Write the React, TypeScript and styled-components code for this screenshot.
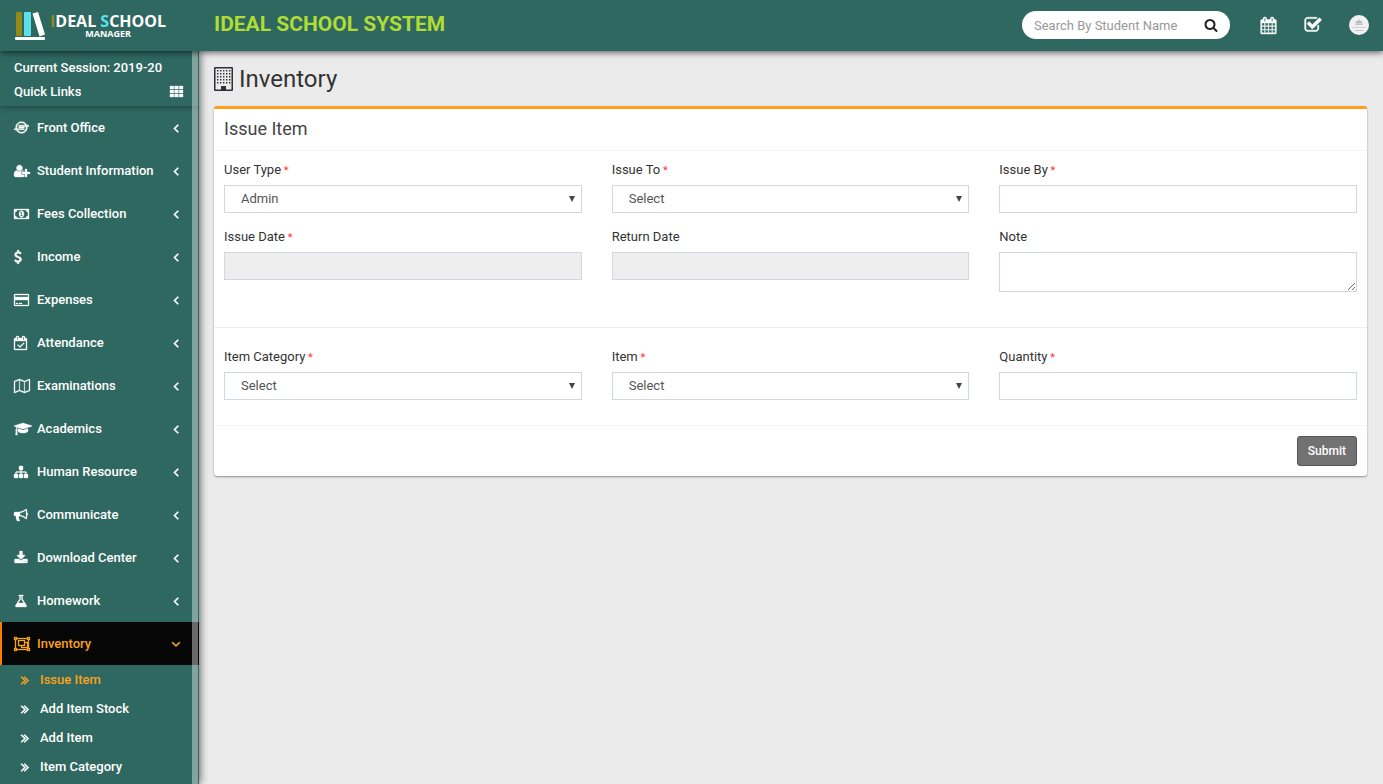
import React from 'react';
import styled, { createGlobalStyle, css } from 'styled-components';
import { FaIoxhost } from 'react-icons/fa';

const GlobalStyle = createGlobalStyle`
  *, *::before, *::after { box-sizing: border-box; }
  body {
    margin: 0;
    background: #ebebeb;
    color: #333;
    font-family: Roboto, "Liberation Sans", sans-serif;
    font-size: 13px;
    line-height: 20px;
  }
  button, input, select, textarea { font: inherit; }
`;

const GREEN = '#2f6860';
const ORANGE = '#faa21c';

/* ---------- icons ---------- */

const glyphs = {
  userPlus: { w: 2048, d: 'M704 896q-159 0-271.5-112.5t-112.5-271.5 112.5-271.5 271.5-112.5 271.5 112.5 112.5 271.5-112.5 271.5-271.5 112.5zm960 128h352q13 0 22.5 9.5t9.5 22.5v192q0 13-9.5 22.5t-22.5 9.5h-352v352q0 13-9.5 22.5t-22.5 9.5h-192q-13 0-22.5-9.5t-9.5-22.5v-352h-352q-13 0-22.5-9.5t-9.5-22.5v-192q0-13 9.5-22.5t22.5-9.5h352v-352q0-13 9.5-22.5t22.5-9.5h192q13 0 22.5 9.5t9.5 22.5v352zm-736 224q0 52 38 90t90 38h256v238q-68 50-171 50h-874q-121 0-194-69t-73-190q0-53 3.5-103.5t14-109 26.5-108.5 43-97.5 62-81 85.5-53.5 111.5-20q19 0 39 17 79 61 154.5 91.5t164.5 30.5 164.5-30.5 154.5-91.5q20-17 39-17 132 0 217 96h-223q-52 0-90 38t-38 90v192z' },
  money: { w: 1920, d: 'M768 1152h384v-96h-128v-448h-114l-148 137 77 80q42-37 55-57h2v288h-128v96zm512-256q0 70-21 142t-59.5 134-101.5 101-138 39-138-39-101.5-101-59.5-134-21-142 21-142 59.5-134 101.5-101 138-39 138 39 101.5 101 59.5 134 21 142zm512 256v-512q-106 0-181-75t-75-181h-1152q0 106-75 181t-181 75v512q106 0 181 75t75 181h1152q0-106 75-181t181-75zm128-832v1152q0 26-19 45t-45 19h-1792q-26 0-45-19t-19-45v-1152q0-26 19-45t45-19h1792q26 0 45 19t19 45z' },
  dollar: { w: 1024, d: 'M978 1185q0 153-99.5 263.5t-258.5 136.5v175q0 14-9 23t-23 9h-135q-13 0-22.5-9.5t-9.5-22.5v-175q-66-9-127.5-31t-101.5-44.5-74-48-46.5-37.5-17.5-18q-17-21-2-41l103-135q7-10 23-12 15-2 24 9l2 2q113 99 243 125 37 8 74 8 81 0 142.5-43t61.5-122q0-28-15-53t-33.5-42-58.5-37.5-66-32-80-32.5q-39-16-61.5-25t-61.5-26.5-62.5-31-56.5-35.5-53.5-42.5-43.5-49-35.5-58-21-66.5-8.5-78q0-138 98-242t255-134v-180q0-13 9.5-22.5t22.5-9.5h135q14 0 23 9t9 23v176q57 6 110.5 23t87 33.5 63.5 37.5 39 29 15 14q17 18 5 38l-81 146q-8 15-23 16-14 3-27-7-3-3-14.5-12t-39-26.5-58.5-32-74.5-26-85.5-11.5q-95 0-155 43t-60 111q0 26 8.5 48t29.5 41.5 39.5 33 56 31 60.5 27 70 27.5q53 20 81 31.5t76 35 75.5 42.5 62 50 53 63.5 31.5 76.5 13 94z' },
  card: { w: 1920, d: 'M1760 128q66 0 113 47t47 113v1216q0 66-47 113t-113 47h-1600q-66 0-113-47t-47-113v-1216q0-66 47-113t113-47h1600zm-1600 128q-13 0-22.5 9.5t-9.5 22.5v224h1664v-224q0-13-9.5-22.5t-22.5-9.5h-1600zm1600 1280q13 0 22.5-9.5t9.5-22.5v-608h-1664v608q0 13 9.5 22.5t22.5 9.5h1600zm-1504-128v-128h256v128h-256zm384 0v-128h384v128h-384z' },
  calendarCheck: { w: 1664, d: 'M1303 964l-512 512q-10 9-23 9t-23-9l-288-288q-9-10-9-23t9-22l46-46q9-9 22-9t23 9l220 220 444-444q10-9 23-9t22 9l46 46q9 9 9 22t-9 23zm-1175 700h1408v-1024h-1408v1024zm384-1216v-288q0-14-9-23t-23-9h-64q-14 0-23 9t-9 23v288q0 14 9 23t23 9h64q14 0 23-9t9-23zm768 0v-288q0-14-9-23t-23-9h-64q-14 0-23 9t-9 23v288q0 14 9 23t23 9h64q14 0 23-9t9-23zm384-64v1280q0 52-38 90t-90 38h-1408q-52 0-90-38t-38-90v-1280q0-52 38-90t90-38h128v-96q0-66 47-113t113-47h64q66 0 113 47t47 113v96h384v-96q0-66 47-113t113-47h64q66 0 113 47t47 113v96h128q52 0 90 38t38 90z' },
  map: { w: 2048, d: 'M2020 11q28 20 28 53v1408q0 20-11 36t-29 23l-640 256q-24 11-48 0l-616-246-616 246q-10 5-24 5-19 0-36-11-28-20-28-53v-1408q0-20 11-36t29-23l640-256q24-11 48 0l616 246 616-246q32-13 60 6zm-1284 135v1270l576 230v-1270zm-608 217v1270l544-217v-1270zm1792 1066v-1270l-544 217v1270z' },
  cap: { w: 2304, d: 'M1774 836l18 316q4 69-82 128t-235 93.5-323 34.5-323-34.5-235-93.5-82-128l18-316 574 181q22 7 48 7t48-7zm530-324q0 23-22 31l-1120 352q-4 1-10 1t-10-1l-652-206q-43 34-71 111.5t-34 178.5q63 36 63 109 0 69-58 107l58 433q2 14-8 25-9 11-24 11h-192q-15 0-24-11-10-11-8-25l58-433q-58-38-58-107 0-73 65-111 11-207 98-330l-333-104q-22-8-22-31t22-31l1120-352q4-1 10-1t10 1l1120 352q22 8 22 31z' },
  sitemap: { w: 1792, d: 'M1792 1248v320q0 40-28 68t-68 28h-320q-40 0-68-28t-28-68v-320q0-40 28-68t68-28h96v-192h-512v192h96q40 0 68 28t28 68v320q0 40-28 68t-68 28h-320q-40 0-68-28t-28-68v-320q0-40 28-68t68-28h96v-192h-512v192h96q40 0 68 28t28 68v320q0 40-28 68t-68 28h-320q-40 0-68-28t-28-68v-320q0-40 28-68t68-28h96v-192q0-52 38-90t90-38h512v-192h-96q-40 0-68-28t-28-68v-320q0-40 28-68t68-28h320q40 0 68 28t28 68v320q0 40-28 68t-68 28h-96v192h512q52 0 90 38t38 90v192h96q40 0 68 28t28 68z' },
  bullhorn: { w: 1792, d: 'M1664 640q53 0 90.5 37.5t37.5 90.5-37.5 90.5-90.5 37.5v384q0 52-38 90t-90 38q-417-347-812-380-58 19-91 66t-31 100.5 40 92.5q-20 33-23 65.5t6 58 33.5 55 48 50 61.5 50.5q-29 58-111.5 83t-168.5 11.5-132-55.5q-7-23-29.5-87.5t-32-94.5-23-89-15-101 3.5-98.5 22-110.5h-122q-66 0-113-47t-47-113v-192q0-66 47-113t113-47h480q435 0 896-384 52 0 90 38t38 90v384zm-128 604v-954q-394 302-768 343v270q377 42 768 341z' },
  download: { w: 1792, d: 'M1344 1344q0-26-19-45t-45-19-45 19-19 45 19 45 45 19 45-19 19-45zm256 0q0-26-19-45t-45-19-45 19-19 45 19 45 45 19 45-19 19-45zm128-224v320q0 40-28 68t-68 28h-1472q-40 0-68-28t-28-68v-320q0-40 28-68t68-28h465l135 136q58 56 136 56t136-56l136-136h464q40 0 68 28t28 68zm-325-569q17 41-14 70l-448 448q-18 19-45 19t-45-19l-448-448q-31-29-14-70 17-39 59-39h256v-448q0-26 19-45t45-19h256q26 0 45 19t19 45v448h256q42 0 59 39z' },
  flask: { w: 1792, d: 'M1591 1448q56 89 21.5 152.5t-140.5 63.5h-1152q-106 0-140.5-63.5t21.5-152.5l503-793v-399h-64q-26 0-45-19t-19-45 19-45 45-19h512q26 0 45 19t19 45-19 45-45 19h-64v399zm-779-725l-272 429h712l-272-429-20-31v-436h-128v436z' },
  group: { w: 2048, d: 'M2048 384h-128v1024h128v384h-384v-128h-1280v128h-384v-384h128v-1024h-128v-384h384v128h1280v-128h384v384zm-256-256v128h128v-128h-128zm-1664 0v128h128v-128h-128zm128 1536v-128h-128v128h128zm1408-128v-128h128v-1024h-128v-128h-1280v128h-128v1024h128v128h1280zm256 128v-128h-128v128h128zm-512-1024h384v768h-896v-256h-384v-768h896v256zm-768 384h640v-512h-640v512zm1024 256v-512h-256v384h-384v128h640z' },
  angleLeft: { w: 1792, d: 'M1203 544q0 13-10 23l-393 393 393 393q10 10 10 23t-10 23l-50 50q-10 10-23 10t-23-10l-466-466q-10-10-10-23t10-23l466-466q10-10 23-10t23 10l50 50q10 10 10 23z' },
  angleDown: { w: 1792, d: 'M1395 736q0 13-10 23l-466 466q-10 10-23 10t-23-10l-466-466q-10-10-10-23t10-23l50-50q10-10 23-10t23 10l393 393 393-393q10-10 23-10t23 10l50 50q10 10 10 23z' },
  anglesRight: { w: 1792, d: 'M979 960q0 13-10 23l-466 466q-10 10-23 10t-23-10l-50-50q-10-10-10-23t10-23l393-393-393-393q-10-10-10-23t10-23l50-50q10-10 23-10t23 10l466 466q10 10 10 23zm384 0q0 13-10 23l-466 466q-10 10-23 10t-23-10l-50-50q-10-10-10-23t10-23l393-393-393-393q-10-10-10-23t10-23l50-50q10-10 23-10t23 10l466 466q10 10 10 23z' },
  search: { w: 1792, d: 'M1216 832q0-185-131.5-316.5t-316.5-131.5-316.5 131.5-131.5 316.5 131.5 316.5 316.5 131.5 316.5-131.5 131.5-316.5zm512 832q0 52-38 90t-90 38q-54 0-90-38l-343-342q-179 124-399 124-143 0-273.5-55.5t-225-150-150-225-55.5-273.5 55.5-273.5 150-225 225-150 273.5-55.5 273.5 55.5 225 150 150 225 55.5 273.5q0 220-124 399l343 343q37 37 37 90z' },
  check: { w: 1792, d: 'M1472 930v318q0 119-84.5 203.5t-203.5 84.5h-832q-119 0-203.5-84.5t-84.5-203.5v-832q0-119 84.5-203.5t203.5-84.5h832q63 0 117 25 15 7 18 23 3 17-9 29l-49 49q-10 10-23 10-3 0-9-2-23-6-45-6h-832q-66 0-113 47t-47 113v832q0 66 47 113t113 47h832q66 0 113-47t47-113v-254q0-13 9-22l64-64q10-10 23-10 6 0 12 3 20 8 20 29zm231-489l-814 814q-24 24-57 24t-57-24l-430-430q-24-24-24-57t24-57l110-110q24-24 57-24t57 24l263 263 647-647q24-24 57-24t57 24l110 110q24 24 24 57t-24 57z' },
  calendar: { w: 1792, d: 'M192 1664h288v-288h-288v288zm352 0h320v-288h-320v288zm-352-352h288v-320h-288v320zm352 0h320v-320h-320v320zm-352-384h288v-288h-288v288zm736 736h320v-288h-320v288zm-384-736h320v-288h-320v288zm768 736h288v-288h-288v288zm-384-352h320v-320h-320v320zm-352-864v-288q0-13-9.5-22.5t-22.5-9.5h-64q-13 0-22.5 9.5t-9.5 22.5v288q0 13 9.5 22.5t22.5 9.5h64q13 0 22.5-9.5t9.5-22.5zm736 864h288v-320h-288v320zm-384-384h320v-288h-320v288zm384 0h288v-288h-288v288zm32-480v-288q0-13-9.5-22.5t-22.5-9.5h-64q-13 0-22.5 9.5t-9.5 22.5v288q0 13 9.5 22.5t22.5 9.5h64q13 0 22.5-9.5t9.5-22.5zm384-64v1280q0 52-38 90t-90 38h-1408q-52 0-90-38t-38-90v-1280q0-52 38-90t90-38h128v-96q0-66 47-113t113-47h64q66 0 113 47t47 113v96h384v-96q0-66 47-113t113-47h64q66 0 113 47t47 113v96h128q52 0 90 38t38 90z' },
  grid: { w: 1664, d: 'M0 256h480v384h-480zM592 256h480v384h-480zM1184 256h480v384h-480zM0 768h480v384h-480zM592 768h480v384h-480zM1184 768h480v384h-480zM0 1280h480v384h-480zM592 1280h480v384h-480zM1184 1280h480v384h-480z' },
};

type GlyphName = keyof typeof glyphs;

const Glyph = ({ name, size = 14, weight = 0 }: { name: GlyphName; size?: number; weight?: number }) => (
  <svg
    width={Math.round((glyphs[name].w / 1792) * size)}
    height={size}
    viewBox={`0 0 ${glyphs[name].w} 1792`}
    fill="currentColor"
    stroke="currentColor"
    strokeWidth={weight}
    overflow="visible"
    aria-hidden="true"
  >
    <path d={glyphs[name].d} />
  </svg>
);

const BuildingIcon = () => (
  <svg width="19" height="24" viewBox="0 0 19 24" fill="#2d2f33" aria-hidden="true">
    <path fillRule="evenodd" d="M1 0h17q1 0 1 1v22q0 1-1 1h-17q-1 0-1-1v-22q0-1 1-1zM1.500 1.500v21h5.500v-3.500h5v3.500h5.500v-21z" />
    {[3, 6, 9, 12, 15].map((y) =>
      [3, 6, 9, 12, 15].map((x) => <rect key={`${x}-${y}`} x={x} y={y} width="1.400" height="1.500" />)
    )}
  </svg>
);

const BooksIcon = () => (
  <svg width="31" height="29" viewBox="0 0 31 29" aria-hidden="true">
    <rect x="1" y="0" width="6" height="24" rx="1" fill="#928a1c" />
    <rect x="9" y="0" width="7" height="24" rx="1" fill="#5ce1e6" />
    <path d="M17.500 1.500L23 0L30 22.500L24.500 24.500Z" fill="#fff" />
    <rect x="0" y="25" width="30" height="3" rx="1" fill="#fff" />
  </svg>
);

/* ---------- header ---------- */

const Header = styled.header`
  position: sticky;
  top: 0;
  z-index: 3;
  display: flex;
  align-items: center;
  height: 51px;
  padding: 0 14px 1px 0;
  background: ${GREEN};
  box-shadow: 0 2px 6px rgba(0, 0, 0, 0.55);
`;

const Logo = styled.a`
  display: flex;
  align-items: center;
  gap: 4px;
  width: 214px;
  padding: 2px 0 0 15px;
  color: #fff;
  font-family: "Open Sans", sans-serif;
  font-weight: 700;
  text-decoration: none;
`;

const LogoText = styled.span`
  display: flex;
  flex-direction: column;
  align-items: center;
`;

const LogoName = styled.span`
  font-size: 16px;
  line-height: 16px;
`;

const LogoSub = styled.span`
  font-size: 9px;
  line-height: 10px;
`;

const Tint = styled.span<{ $color: string }>`
  color: ${(p) => p.$color};
`;

const SystemName = styled.div`
  flex: 1;
  color: #b0dc35;
  font-size: 21px;
  font-weight: 700;
  line-height: 26px;
  padding-bottom: 2px;
`;

const SearchBox = styled.form`
  display: flex;
  align-items: center;
  width: 208px;
  height: 28px;
  padding: 0 12px;
  border-radius: 14px;
  background: #fff;
`;

const SearchInput = styled.input`
  flex: 1;
  min-width: 0;
  height: 28px;
  margin-right: 24px;
  padding: 0;
  border: 0;
  outline: 0;
  background: none;
  color: #444;
  font-size: 13px;
  &::placeholder { color: #999; opacity: 1; }
`;

const iconButton = css`
  display: flex;
  align-items: center;
  justify-content: center;
  padding: 0;
  border: 0;
  background: none;
  cursor: pointer;
`;

const SearchButton = styled.button`
  ${iconButton}
  color: #222;
`;

const Tools = styled.nav`
  display: flex;
  align-items: center;
  gap: 27px;
  margin-left: 30px;
`;

const ToolButton = styled.button`
  ${iconButton}
  color: #fff;
`;

const Avatar = styled.button`
  ${iconButton}
  border-radius: 10px;
`;

const AvatarArt = () => (
  <svg width="20" height="20" viewBox="0 0 20 20" aria-hidden="true">
    <circle cx="10" cy="10" r="10" fill="#f1f1f1" />
    <path d="M6 8.500L8 5.500L9 6L10 4L11 6L12 5.500L14 8.500Z" fill="#b9b9b9" />
    <path d="M6 9.500h8M3.500 12.500h2M6.500 12.500h3M10.500 12.500h2M13.500 12.500h2.500M6 15.500h8" stroke="#c4c4c4" strokeWidth="1" />
  </svg>
);

/* ---------- sidebar ---------- */

const Body = styled.div`
  display: flex;
  min-height: calc(100vh - 51px);
`;

const Sidebar = styled.aside`
  position: sticky;
  top: 51px;
  z-index: 2;
  flex: none;
  width: 199px;
  height: calc(100vh - 51px);
  overflow: hidden;
  background: ${GREEN};
  color: #fff;
  font-weight: 500;
`;

const SidebarFrame = styled.div`
  position: relative;
  z-index: 2;
  flex: none;
  box-shadow: 1px 0 8px rgba(0, 0, 0, 0.6);
`;

const ScrollThumb = styled.div`
  position: absolute;
  top: 0;
  right: 1px;
  bottom: 0;
  width: 6px;
  background: rgba(255, 255, 255, 0.4);
`;

const Session = styled.div`
  height: 55px;
  padding: 5px 16px 0 14px;
  line-height: 24px;
  box-shadow: 0 1px 6px rgba(0, 0, 0, 0.4);
`;

const QuickLinks = styled.a`
  display: flex;
  align-items: center;
  justify-content: space-between;
  color: inherit;
  text-decoration: none;
  svg { margin-bottom: 2px; }
`;

const Menu = styled.ul`
  margin: 0;
  padding: 0;
  list-style: none;
`;

const MenuLink = styled.a<{ $active?: boolean }>`
  display: flex;
  align-items: center;
  height: 43px;
  padding: 0 16px 0 12px;
  border-left: 2px solid ${(p) => (p.$active ? '#f57c00' : 'transparent')};
  background: ${(p) => (p.$active ? '#060606' : 'transparent')};
  color: ${(p) => (p.$active ? ORANGE : '#fff')};
  text-decoration: none;
`;

const MenuIcon = styled.span`
  display: flex;
  width: 23px;
`;

const MenuText = styled.span`
  flex: 1;
  white-space: nowrap;
`;

const SubLink = styled.a<{ $active?: boolean }>`
  display: flex;
  align-items: center;
  gap: 8px;
  height: 29px;
  padding-left: 18px;
  color: ${(p) => (p.$active ? ORANGE : '#fff')};
  text-decoration: none;
`;

/* ---------- content ---------- */

const Main = styled.main`
  flex: 1;
  min-width: 0;
  padding: 12px 16px 16px 15px;
`;

const PageTitle = styled.h1`
  display: flex;
  align-items: center;
  gap: 6px;
  margin: 0 0 11px;
  font-size: 24px;
  font-weight: 400;
  line-height: 32px;
`;

const Card = styled.form`
  border-top: 3px solid ${ORANGE};
  border-radius: 3px;
  background: #fff;
  box-shadow: 0 1px 2px rgba(0, 0, 0, 0.4);
`;

const CardTitle = styled.h2`
  margin: 0;
  padding: 10px 10px 11px;
  border-bottom: 1px solid #f4f4f4;
  color: #444;
  font-size: 18px;
  font-weight: 400;
  line-height: 20px;
`;

const FieldGrid = styled.div<{ $divided?: boolean }>`
  display: grid;
  grid-template-columns: repeat(3, minmax(0, 1fr));
  gap: 14px 30px;
  align-items: start;
  padding: ${(p) => (p.$divided ? '19px 10px 25px' : '9px 10px 35px')};
  border-top: ${(p) => (p.$divided ? '1px solid #eee' : '0')};
`;

const Field = styled.div`
  display: flex;
  flex-direction: column;
  gap: 5px;
`;

const Label = styled.label`
  height: 20px;
  font-size: 13px;
  line-height: 20px;
`;

const Star = styled.span`
  color: #f33;
  font-size: 11px;
`;

const control = css`
  display: block;
  width: 100%;
  height: 28px;
  margin: 0;
  border: 1px solid #d2d6de;
  border-radius: 0;
  outline: 0;
  background: #fff;
  color: #555;
`;

const TextInput = styled.input`
  ${control}
  padding: 0 12px;
  &[readonly] { background: #eee; }
`;

const NoteArea = styled.textarea`
  ${control}
  height: 40px;
  padding: 4px 12px;
  resize: vertical;
`;

const SelectWrap = styled.div`
  position: relative;
  &::after {
    content: "";
    position: absolute;
    top: 11px;
    right: 7px;
    border: 3px solid transparent;
    border-top: 6px solid #444;
    border-bottom: 0;
    pointer-events: none;
  }
`;

const Select = styled.select`
  ${control}
  appearance: none;
  padding: 0 16px;
`;

const Footer = styled.div`
  display: flex;
  justify-content: flex-end;
  padding: 10px;
  border-top: 1px solid #f4f4f4;
`;

const Submit = styled.button`
  height: 30px;
  padding: 0 10px;
  border: 1px solid #555;
  border-radius: 3px;
  background: #727272;
  color: #fff;
  font-size: 12px;
  font-weight: 500;
`;

const menu: { label: string; icon: GlyphName | 'ioxhost' }[] = [
  { label: 'Front Office', icon: 'ioxhost' },
  { label: 'Student Information', icon: 'userPlus' },
  { label: 'Fees Collection', icon: 'money' },
  { label: 'Income', icon: 'dollar' },
  { label: 'Expenses', icon: 'card' },
  { label: 'Attendance', icon: 'calendarCheck' },
  { label: 'Examinations', icon: 'map' },
  { label: 'Academics', icon: 'cap' },
  { label: 'Human Resource', icon: 'sitemap' },
  { label: 'Communicate', icon: 'bullhorn' },
  { label: 'Download Center', icon: 'download' },
  { label: 'Homework', icon: 'flask' },
  { label: 'Inventory', icon: 'group' },
];

const submenu = ['Issue Item', 'Add Item Stock', 'Add Item', 'Item Category'];

type FormFieldProps = {
  id: string;
  label: string;
  required?: boolean;
  children: React.ReactNode;
};

const FormField = ({ id, label, required, children }: FormFieldProps) => (
  <Field>
    <Label htmlFor={id}>
      {label}
      {required && <Star> *</Star>}
    </Label>
    {children}
  </Field>
);

const SelectBox = ({ id, option }: { id: string; option: string }) => (
  <SelectWrap>
    <Select id={id}>
      <option>{option}</option>
    </Select>
  </SelectWrap>
);

export default function App() {
  return (
    <>
      <GlobalStyle />
      <Header>
        <Logo href="#">
          <BooksIcon />
          <LogoText>
            <LogoName>
              <Tint $color="#928a1c">I</Tint>DEAL <Tint $color="#5ce1e6">S</Tint>CHOOL
            </LogoName>
            <LogoSub>MANAGER</LogoSub>
          </LogoText>
        </Logo>
        <SystemName>IDEAL SCHOOL SYSTEM</SystemName>
        <SearchBox onSubmit={(e) => e.preventDefault()}>
          <SearchInput aria-label="Search" placeholder="Search By Student Name" />
          <SearchButton aria-label="Search"><Glyph name="search" /></SearchButton>
        </SearchBox>
        <Tools>
          <ToolButton aria-label="Calendar"><Glyph name="calendar" size={17} weight={40} /></ToolButton>
          <ToolButton aria-label="Tasks"><Glyph name="check" size={18} weight={50} /></ToolButton>
          <Avatar aria-label="Account"><AvatarArt /></Avatar>
        </Tools>
      </Header>
      <Body>
        <SidebarFrame>
          <Sidebar>
            <Session>
              <div>Current Session: 2019-20</div>
              <QuickLinks href="#">
                Quick Links
                <Glyph name="grid" weight={40} />
              </QuickLinks>
            </Session>
            <Menu>
              {menu.map(({ label, icon }) => {
                const active = label === 'Inventory';
                return (
                  <li key={label}>
                    <MenuLink href="#" $active={active}>
                      <MenuIcon>
                        {icon === 'ioxhost' ? (
                          <FaIoxhost size={15} stroke="currentColor" strokeWidth={20} />
                        ) : (
                          <Glyph name={icon} weight={40} />
                        )}
                      </MenuIcon>
                      <MenuText>{label}</MenuText>
                      <Glyph name={active ? 'angleDown' : 'angleLeft'} weight={90} />
                    </MenuLink>
                    {active && (
                      <Menu>
                        {submenu.map((item) => (
                          <li key={item}>
                            <SubLink href="#" $active={item === 'Issue Item'}>
                              <Glyph name="anglesRight" weight={90} />
                              {item}
                            </SubLink>
                          </li>
                        ))}
                      </Menu>
                    )}
                  </li>
                );
              })}
            </Menu>
            <ScrollThumb />
          </Sidebar>
        </SidebarFrame>
        <Main>
          <PageTitle>
            <BuildingIcon />
            Inventory
          </PageTitle>
          <Card onSubmit={(e) => e.preventDefault()}>
            <CardTitle>Issue Item</CardTitle>
            <FieldGrid>
              <FormField id="user-type" label="User Type" required>
                <SelectBox id="user-type" option="Admin" />
              </FormField>
              <FormField id="issue-to" label="Issue To" required>
                <SelectBox id="issue-to" option="Select" />
              </FormField>
              <FormField id="issue-by" label="Issue By" required>
                <TextInput id="issue-by" />
              </FormField>
              <FormField id="issue-date" label="Issue Date" required>
                <TextInput id="issue-date" readOnly />
              </FormField>
              <FormField id="return-date" label="Return Date">
                <TextInput id="return-date" readOnly />
              </FormField>
              <FormField id="note" label="Note">
                <NoteArea id="note" />
              </FormField>
            </FieldGrid>
            <FieldGrid $divided>
              <FormField id="item-category" label="Item Category" required>
                <SelectBox id="item-category" option="Select" />
              </FormField>
              <FormField id="item" label="Item" required>
                <SelectBox id="item" option="Select" />
              </FormField>
              <FormField id="quantity" label="Quantity" required>
                <TextInput id="quantity" />
              </FormField>
            </FieldGrid>
            <Footer>
              <Submit>Submit</Submit>
            </Footer>
          </Card>
        </Main>
      </Body>
    </>
  );
}
